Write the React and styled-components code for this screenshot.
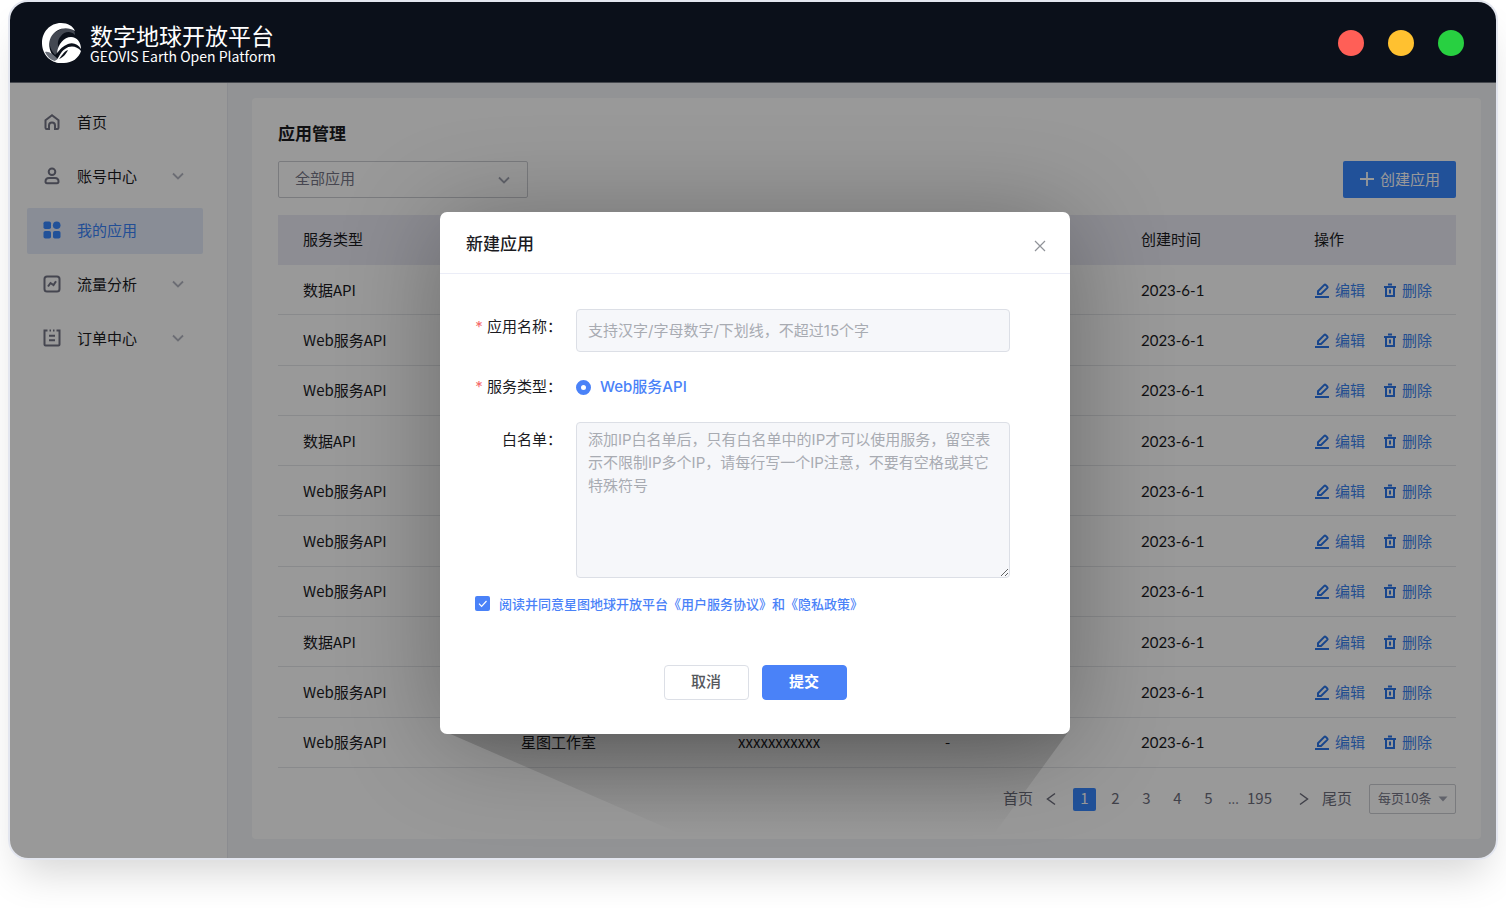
import React from "react";
import styled, { createGlobalStyle } from "styled-components";

const GlobalStyle = createGlobalStyle`
  * {
    box-sizing: border-box;
  }

  body {
    margin: 0;
    background: #ffffff;
    font-family: "Noto Sans CJK SC", "Noto Sans", sans-serif;
    font-size: 15px;
    line-height: 24px;
    color: #1b1b1f;
  }

  button,
  input,
  select,
  textarea {
    font: inherit;
    color: inherit;
  }
`;

const Window = styled.div`
  margin: 0 8px 48px;
  border: 2px solid #e3e6ef;
  border-radius: 20px;
  overflow: hidden;
  box-shadow: 0 24px 40px -12px rgba(0, 0, 0, 0.17);
`;

const Header = styled.header`
  display: flex;
  align-items: center;
  justify-content: space-between;
  height: 81px;
  padding: 2px 32px 0;
  background: #0b101a;
  border-bottom: 1px solid #45484e;
`;

const Brand = styled.div`
  display: flex;
  align-items: center;
  gap: 8px;
  color: #ffffff;
`;

const BrandName = styled.h1`
  margin: 0;
  font-size: 23px;
  font-weight: 400;
  line-height: 26px;
`;

const BrandSubtitle = styled.p`
  margin: 0;
  font-size: 14px;
  line-height: 16px;
`;

const WindowDots = styled.div`
  display: flex;
  gap: 24px;
`;

const Dot = styled.span`
  width: 26px;
  height: 26px;
  border-radius: 50%;
  background: ${({ $color }) => $color};
`;

const Body = styled.div`
  display: grid;
  grid-template-areas: "stage";

  > * {
    grid-area: stage;
  }
`;

const Workspace = styled.div`
  display: grid;
  grid-template-columns: 218px 1fr;
  background: #f3f5f8;
`;

const Mask = styled.div`
  display: grid;
  align-items: center;
  justify-items: center;
  padding-top: 4px;
  padding-left: 4px;
  overflow: hidden;
  background: rgba(0, 0, 0, 0.4);
`;

const Sidebar = styled.nav`
  display: flex;
  flex-direction: column;
  gap: 8px;
  padding: 17px 24px 17px 17px;
  background: #ffffff;
  border-right: 1px solid #e8eaf0;
`;

const MenuItem = styled.a`
  display: grid;
  grid-template-columns: 18px 1fr 16px;
  align-items: center;
  gap: 16px;
  height: 46px;
  padding: 0 17px 2px 16px;
  border-radius: 2px;
  text-decoration: none;
  color: ${({ $active }) => ($active ? "#3a83f8" : "#1b1b1f")};
  background: ${({ $active }) => ($active ? "#e4ebfb" : "transparent")};

  svg {
    color: ${({ $active }) => ($active ? "#3787ff" : "#747586")};
  }
`;

const MenuChevron = styled.span`
  display: grid;

  svg {
    color: #b4b6c2;
  }
`;

const Content = styled.main`
  padding: 15px 15px 19px 24px;
`;

const Panel = styled.section`
  padding: 23px 25px 25px 26px;
  background: #ffffff;
  border-radius: 4px;
`;

const PanelTitle = styled.h2`
  margin: 0 0 16px;
  font-size: 17px;
  font-weight: 700;
  line-height: 24px;
`;

const Toolbar = styled.div`
  display: flex;
  justify-content: space-between;
  margin-bottom: 17px;
`;

const SelectBox = styled.div`
  display: grid;
  align-items: center;
  width: ${({ $width }) => $width};

  > * {
    grid-area: 1 / 1;
  }

  svg {
    justify-self: end;
    margin-right: ${({ $inset }) => $inset};
    color: #a2a5b3;
    pointer-events: none;
  }
`;

const Select = styled.select`
  appearance: none;
  width: 100%;
  height: ${({ $small }) => ($small ? "30px" : "37px")};
  padding: ${({ $small }) => ($small ? "0 8px 2px" : "0 16px 3px")};
  font-size: ${({ $small }) => ($small ? "13px" : "15px")};
  line-height: 20px;
  color: #757686;
  background: transparent;
  border: 1px solid #cccdd3;
  border-radius: 2px;
`;

const CreateButton = styled.button`
  display: flex;
  align-items: center;
  justify-content: center;
  gap: 5px;
  width: 113px;
  height: 37px;
  padding: 0 0 2px;
  color: #ffffff;
  background: #3787ff;
  border: 0;
  border-radius: 2px;
`;

const Table = styled.table`
  width: 100%;
  height: 553px;
  table-layout: fixed;
  border-collapse: separate;
  border-spacing: 0;

  th,
  td {
    height: 50px;
    padding: 0 0 0 25px;
    text-align: left;
    font-weight: 400;
    white-space: nowrap;
  }

  th {
    padding-bottom: 2px;
    background: #ebecf5;
  }

  td {
    border-bottom: 1px solid #e5e6ea;
  }
`;

const DateText = styled.time`
  font-family: Lato, sans-serif;
`;

const Actions = styled.div`
  display: flex;
  gap: 18px;
`;

const ActionLink = styled.a`
  display: flex;
  align-items: center;
  gap: 5px;
  text-decoration: none;
  color: #3a83f0;

  svg {
    color: #2a76ea;
  }
`;

const Pagination = styled.nav`
  display: flex;
  align-items: center;
  justify-content: flex-end;
  gap: 12px;
  margin-top: 16px;
  color: #6d6e7c;
`;

const PageNumbers = styled.div`
  display: flex;
  align-items: center;
  gap: 8px;
  margin-right: 10px;
`;

const PageButton = styled.button`
  display: grid;
  place-items: center;
  min-width: ${({ $plain }) => ($plain ? "16px" : "23px")};
  height: 23px;
  padding: 0 0 3px;
  line-height: 20px;
  border: 0;
  border-radius: 2px;
  color: ${({ $active }) => ($active ? "#ffffff" : "#6d6e7c")};
  background: ${({ $active }) => ($active ? "#3787ff" : "transparent")};
`;

const ArrowButton = styled(PageButton)`
  padding: 0;
`;

const Ellipsis = styled.span`
  width: 11px;
  font-size: 13px;
`;

const PageSize = styled.div`
  margin-left: 5px;
`;

const DialogFrame = styled.div`
  position: relative;
  width: 630px;
`;

/* The slanted shadow that the dialog throws below itself. */
const Beam = styled.div`
  position: absolute;
  top: calc(100% - 4px);
  left: 0;
  right: 0;
  height: 104px;
  clip-path: polygon(0 0, 100% 0, 88% 100%, 38% 100%);
  background: linear-gradient(rgba(0, 0, 0, 0.2), rgba(0, 0, 0, 0));
`;

const Dialog = styled.form`
  position: relative;
  background: #ffffff;
  border-radius: 7px;
  box-shadow: 0 8px 100px rgba(0, 0, 0, 0.3);
  font-family: Inter, "Noto Sans CJK SC", sans-serif;
`;

const DialogHeader = styled.div`
  display: flex;
  align-items: center;
  justify-content: space-between;
  height: 62px;
  padding: 3px 23px 0 26px;
  border-bottom: 1px solid #ebedf7;
`;

const DialogTitle = styled.h2`
  margin: 0;
  font-size: 17px;
  font-weight: 500;
  line-height: 24px;
`;

const CloseButton = styled.button`
  display: grid;
  padding: 5px 0 0;
  border: 0;
  background: transparent;
  color: #909399;
`;

const Fields = styled.div`
  display: grid;
  grid-template-columns: 122px 1fr;
  gap: 17px 14px;
  padding: 35px 60px 0 0;
`;

const FieldLabel = styled.label`
  line-height: 36px;
  text-align: right;

  &::before {
    content: ${({ $required }) => ($required ? '"* "' : "none")};
    color: #f56c6c;
  }
`;

const TextInput = styled.input`
  width: 100%;
  height: 43px;
  padding: 0 11px;
  background: #f6f7fa;
  border: 1px solid #dcdfe6;
  border-radius: 4px;

  &::placeholder {
    color: #a8abb2;
  }
`;

const TextArea = styled.textarea`
  display: block;
  width: 100%;
  height: 156px;
  padding: 5px 11px;
  line-height: 23px;
  background: #f6f7fa;
  border: 1px solid #dcdfe6;
  border-radius: 4px;
  resize: both;

  &::placeholder {
    color: #a8abb2;
  }
`;

const RadioLabel = styled.label`
  display: flex;
  align-items: center;
  gap: 9px;
  padding-top: 1px;
  font-weight: 500;
  color: #4a82f8;
`;

const Radio = styled.input`
  appearance: none;
  width: 15px;
  height: 15px;
  margin: 0;
  border: 5px solid #4a82f8;
  border-radius: 50%;
  background: #ffffff;
`;

const Agreement = styled.div`
  display: flex;
  align-items: center;
  gap: 9px;
  margin: 16px 35px 0;
  font-size: 13px;
  font-weight: 500;
  line-height: 20px;
  color: #4a82f8;
`;

const CheckboxBox = styled.span`
  display: grid;
  place-items: center;

  > * {
    grid-area: 1 / 1;
  }

  svg {
    color: #ffffff;
    pointer-events: none;
  }
`;

const Checkbox = styled.input`
  appearance: none;
  width: 15px;
  height: 15px;
  margin: 0;
  background: #4a82f8;
  border-radius: 2px;
`;

const DialogFooter = styled.div`
  display: flex;
  justify-content: center;
  gap: 13px;
  padding: 51px 0 34px;
`;

const DialogButton = styled.button`
  width: 85px;
  height: 35px;
  padding: 0;
  font-weight: ${({ $primary }) => ($primary ? 700 : 500)};
  color: ${({ $primary }) => ($primary ? "#ffffff" : "#55575c")};
  background: ${({ $primary }) => ($primary ? "#4a82f8" : "#ffffff")};
  border: 1px solid ${({ $primary }) => ($primary ? "#4a82f8" : "#dcdfe6")};
  border-radius: 4px;
`;

const Icon = ({ size = 18, width = 2, children }) => (
  <svg
    width={size}
    height={size}
    viewBox={`0 0 ${size} ${size}`}
    fill="none"
    stroke="currentColor"
    strokeWidth={width}
    aria-hidden="true"
  >
    {children}
  </svg>
);

const Logo = () => (
  <svg width="40" height="40" viewBox="0 0 40 40" aria-hidden="true">
    <path
      d="M25 3C31 4 33 8 33 12C28 7 22 9 19 13C15 17 15 23 18 27L13 32C7 26 6 17 10 11Z"
      fill="#434852"
    />
    <path d="M2 27C5 30 10 31 14 34L18 39C10 40 4 34 2 27Z" fill="#555a64" />
    <path
      d="M33 8C25 3 14 5 9 14C6 20 7 27 11 33C13 36 16 38 19 40C8 40 0 31 0 20C0 9 8 0 19 0C26 0 31 3 33 8Z"
      fill="#ffffff"
    />
    <path d="M3 29C7 28 11 31 15 36L13 38C8 37 5 33 3 29Z" fill="#6b707a" />
    <path
      d="M15 30C16 21 22 14 29 14C35 14 39 19 39 26C36 21 31 19 26 21C21 23 18 26 15 30Z"
      fill="#ffffff"
    />
    <path
      d="M13 39C17 35 18 29 23 26C28 22 35 23 39 28C37 35 30 40 22 40C18 40 15 40 13 39Z"
      fill="#ffffff"
    />
    <path d="M17 36C20 33 21 29 26 27C24 31 22 34 17 36Z" fill="#0b101a" />
  </svg>
);

const ChevronDown = () => (
  <Icon size={16} width={1.8}>
    <path d="M3 5.5l5 5 5-5" />
  </Icon>
);

const HomeIcon = () => (
  <Icon>
    <path d="M2.5 7.2L9 2.2l6.5 5v7.6a1.2 1.2 0 0 1-1.2 1.2h-2.3v-3.500a3 3 0 0 0-6 0V16H3.700a1.200 1.200 0 0 1-1.200-1.200z" />
  </Icon>
);

const UserIcon = () => (
  <Icon>
    <circle cx="9" cy="4.8" r="3.3" />
    <path d="M2.5 14.5c0-2.300 1.500-3.500 3.500-3.500h6c2 0 3.500 1.200 3.500 3.500 0 1.200-.5 1.700-1.500 1.700H4c-1 0-1.500-.5-1.500-1.700z" />
  </Icon>
);

const AppsIcon = () => (
  <svg width="18" height="18" viewBox="0 0 18 18" fill="currentColor" aria-hidden="true">
    <rect x="0.5" y="0.5" width="7.5" height="7.5" rx="1.8" />
    <circle cx="13.7" cy="4.3" r="3.8" />
    <rect x="0.5" y="10" width="7.5" height="7.5" rx="1.8" />
    <rect x="10" y="10" width="7.5" height="7.5" rx="1.8" />
  </svg>
);

const TrafficIcon = () => (
  <Icon>
    <rect x="1.5" y="1.5" width="15" height="15" rx="2.5" />
    <path d="M5 11.500l2.500-3.500 3 2 2.500-3.800" />
  </Icon>
);

const OrderIcon = () => (
  <Icon>
    <path d="M4.500 1.500h-3v14a1 1 0 0 0 1 1h13a1 1 0 0 0 1-1v-14h-3M6.500 1.500h1.500M10 1.500h1.500M6 6.800h6M6 11.200h6" />
  </Icon>
);

const EditIcon = () => (
  <Icon size={16}>
    <path d="M1 15h14M4 12V9.200L10.300 2.900a1 1 0 0 1 1.400 0l1.600 1.600a1 1 0 0 1 0 1.400L7 12z" />
  </Icon>
);

const TrashIcon = () => (
  <Icon size={14}>
    <path d="M1 4h12M5 1.500h4M3 4v9h8V4M7 6.500v4" />
  </Icon>
);

const MENU = [
  { label: "首页", icon: HomeIcon },
  { label: "账号中心", icon: UserIcon, nested: true },
  { label: "我的应用", icon: AppsIcon, active: true },
  { label: "流量分析", icon: TrafficIcon, nested: true },
  { label: "订单中心", icon: OrderIcon, nested: true },
];

const APPS = [
  { type: "数据API" },
  { type: "Web服务API" },
  { type: "Web服务API" },
  { type: "数据API" },
  { type: "Web服务API" },
  { type: "Web服务API" },
  { type: "Web服务API" },
  { type: "数据API" },
  { type: "Web服务API" },
  { type: "Web服务API", name: "星图工作室", appKey: "xxxxxxxxxxx", note: "-" },
];

const SideMenu = () => (
  <Sidebar>
    {MENU.map(({ label, icon: ItemIcon, active, nested }) => (
      <MenuItem key={label} href="#" $active={active}>
        <ItemIcon />
        <span>{label}</span>
        {nested && (
          <MenuChevron>
            <ChevronDown />
          </MenuChevron>
        )}
      </MenuItem>
    ))}
  </Sidebar>
);

const AppTable = () => (
  <Table>
    <colgroup>
      <col width="218" />
      <col width="217" />
      <col width="207" />
      <col width="196" />
      <col width="173" />
      <col />
    </colgroup>
    <thead>
      <tr>
        <th>服务类型</th>
        <th />
        <th />
        <th />
        <th>创建时间</th>
        <th>操作</th>
      </tr>
    </thead>
    <tbody>
      {APPS.map(({ type, name, appKey, note }, index) => (
        <tr key={index}>
          <td>{type}</td>
          <td>{name}</td>
          <td>{appKey}</td>
          <td>{note}</td>
          <td>
            <DateText>2023-6-1</DateText>
          </td>
          <td>
            <Actions>
              <ActionLink href="#">
                <EditIcon />
                编辑
              </ActionLink>
              <ActionLink href="#">
                <TrashIcon />
                删除
              </ActionLink>
            </Actions>
          </td>
        </tr>
      ))}
    </tbody>
  </Table>
);

const Pager = () => (
  <Pagination>
    <PageButton $plain>首页</PageButton>
    <ArrowButton $plain aria-label="上一页">
      <Icon size={16} width={1.5}>
        <path d="M10 2.500L2.500 8l7.500 5.500" />
      </Icon>
    </ArrowButton>
    <PageNumbers>
      {[1, 2, 3, 4, 5].map((page) => (
        <PageButton key={page} $active={page === 1}>
          {page}
        </PageButton>
      ))}
      <Ellipsis>...</Ellipsis>
      <PageButton>195</PageButton>
    </PageNumbers>
    <ArrowButton $plain aria-label="下一页">
      <Icon size={16} width={1.5}>
        <path d="M6 2.500L13.500 8 6 13.500" />
      </Icon>
    </ArrowButton>
    <PageButton $plain>尾页</PageButton>
    <PageSize>
      <SelectBox $width="87px" $inset="8px">
        <Select $small aria-label="每页条数">
          <option>每页10条</option>
        </Select>
        <svg width="10" height="6" viewBox="0 0 10 6" fill="currentColor" aria-hidden="true">
          <path d="M0.5 0.5h9L5 5.5z" />
        </svg>
      </SelectBox>
    </PageSize>
  </Pagination>
);

const CreateDialog = () => (
  <DialogFrame>
    <Beam />
    <Dialog role="dialog" aria-labelledby="dialog-title">
      <DialogHeader>
        <DialogTitle id="dialog-title">新建应用</DialogTitle>
        <CloseButton type="button" aria-label="关闭">
          <Icon size={14} width={1.2}>
            <path d="M2 2l10 10M12 2L2 12" />
          </Icon>
        </CloseButton>
      </DialogHeader>
      <Fields>
        <FieldLabel htmlFor="app-name" $required>
          应用名称：
        </FieldLabel>
        <TextInput
          id="app-name"
          placeholder="支持汉字/字母数字/下划线，不超过15个字"
        />
        <FieldLabel htmlFor="service-web" $required>
          服务类型：
        </FieldLabel>
        <RadioLabel>
          <Radio id="service-web" type="radio" name="service" defaultChecked />
          Web服务API
        </RadioLabel>
        <FieldLabel htmlFor="whitelist">白名单：</FieldLabel>
        <TextArea
          id="whitelist"
          placeholder="添加IP白名单后，只有白名单中的IP才可以使用服务，留空表示不限制IP多个IP，请每行写一个IP注意，不要有空格或其它特殊符号"
        />
      </Fields>
      <Agreement>
        <CheckboxBox>
          <Checkbox id="agree" type="checkbox" defaultChecked />
          <Icon size={15} width={1.2}>
            <path d="M4 7.6l2.600 2.700L11.500 5" />
          </Icon>
        </CheckboxBox>
        <label htmlFor="agree">
          阅读并同意星图地球开放平台《用户服务协议》和《隐私政策》
        </label>
      </Agreement>
      <DialogFooter>
        <DialogButton type="button">取消</DialogButton>
        <DialogButton type="submit" $primary>
          提交
        </DialogButton>
      </DialogFooter>
    </Dialog>
  </DialogFrame>
);

const App = () => (
  <>
    <GlobalStyle />
    <Window>
      <Header>
        <Brand>
          <Logo />
          <div>
            <BrandName>数字地球开放平台</BrandName>
            <BrandSubtitle>GEOVIS Earth Open Platform</BrandSubtitle>
          </div>
        </Brand>
        <WindowDots>
          <Dot $color="#ff5f57" />
          <Dot $color="#ffc130" />
          <Dot $color="#28d041" />
        </WindowDots>
      </Header>
      <Body>
        <Workspace>
          <SideMenu />
          <Content>
            <Panel>
              <PanelTitle>应用管理</PanelTitle>
              <Toolbar>
                <SelectBox $width="250px" $inset="16px">
                  <Select aria-label="应用筛选">
                    <option>全部应用</option>
                  </Select>
                  <ChevronDown />
                </SelectBox>
                <CreateButton>
                  <Icon size={16} width={1.8}>
                    <path d="M8 1v14M1 8h14" />
                  </Icon>
                  创建应用
                </CreateButton>
              </Toolbar>
              <AppTable />
              <Pager />
            </Panel>
          </Content>
        </Workspace>
        <Mask>
          <CreateDialog />
        </Mask>
      </Body>
    </Window>
  </>
);

export default App;
